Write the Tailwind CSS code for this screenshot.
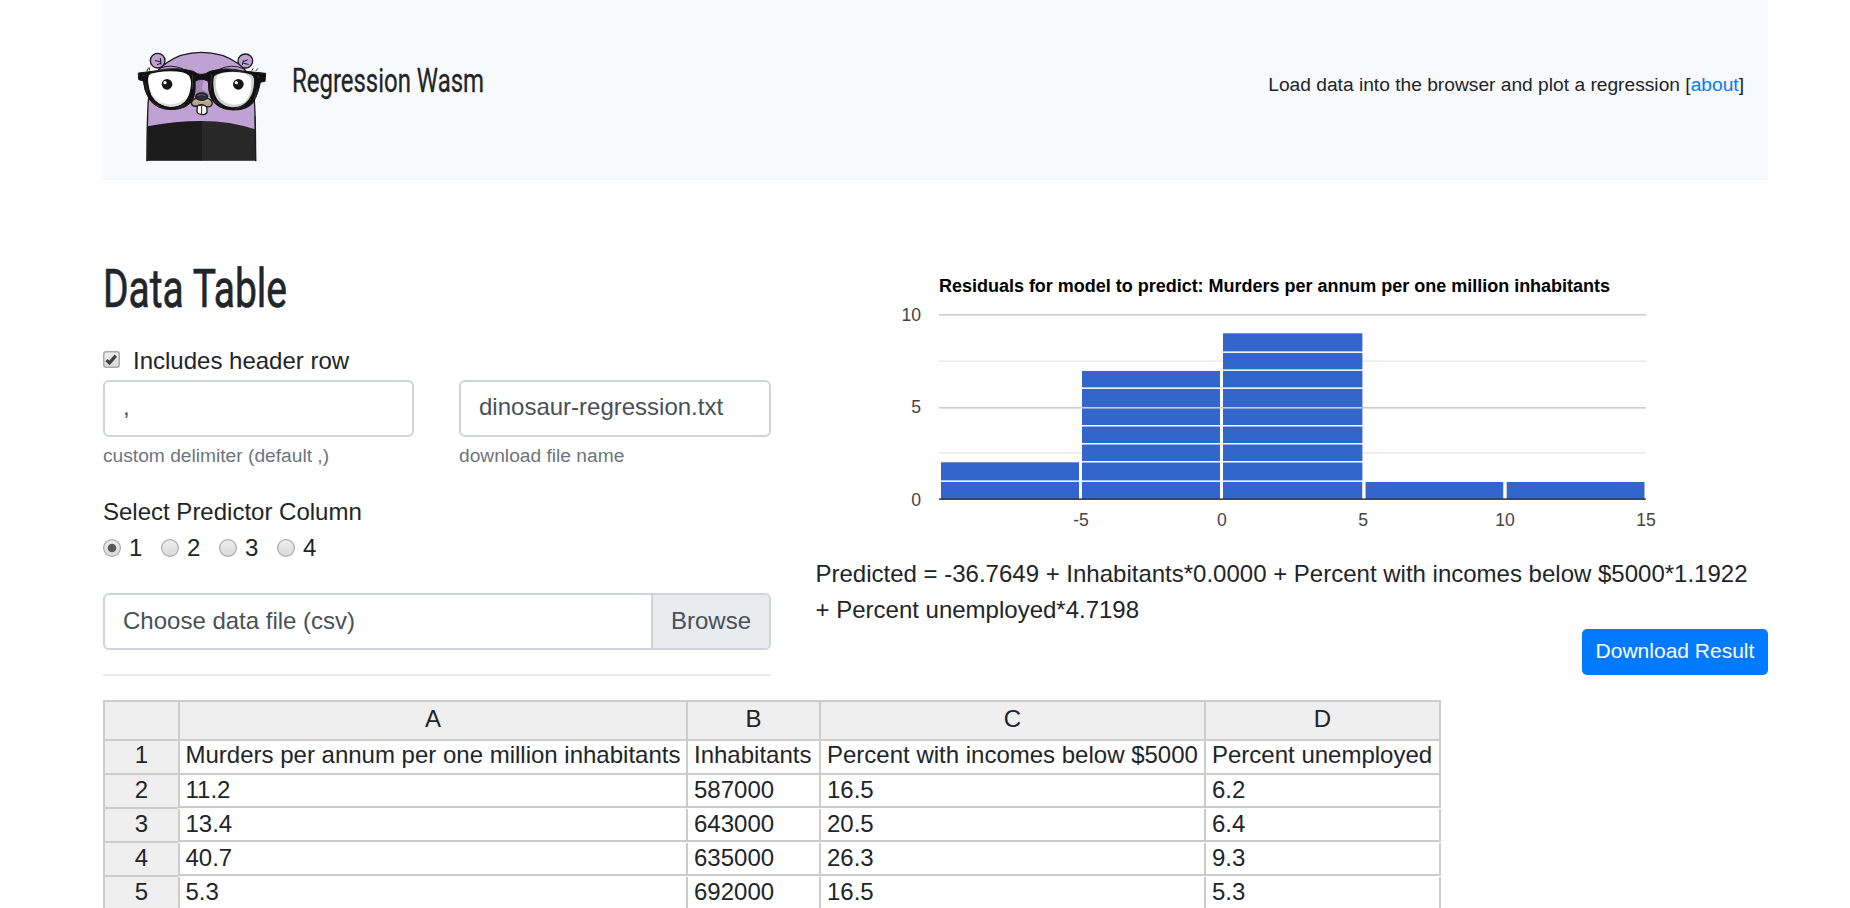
<!DOCTYPE html>
<html lang="en">
<head>
<meta charset="utf-8">
<title>Regression Wasm</title>
<script src="https://cdn.jsdelivr.net/npm/@tailwindcss/browser@4"></script>
</head>
<body class="bg-white h-[908px] overflow-hidden font-['Liberation_Sans',Arial,sans-serif] text-2xl leading-9 text-[#212529]">
<div class="ml-[103px] w-[1665px]">
  <header class="h-[180px] bg-[#f8f9fb] flex items-start justify-between pl-[27px] pr-[24px]">
    <div class="flex items-start">
      <svg class="mt-10 w-[145px] h-[130px]" viewBox="0 0 435 390" fill="none" stroke="#1c1c1e" stroke-width="4" stroke-linecap="round" stroke-linejoin="round">
        <ellipse cx="83" cy="62" rx="22" ry="22" fill="#c0a1d3"/>
        <ellipse cx="346" cy="63" rx="22" ry="21" fill="#c0a1d3"/>
        <path d="M51 362C52 270 50 190 60 140C66 104 88 84 108 70C140 46 175 37 214 37C253 37 290 46 323 70C343 84 362 104 368 140C378 190 376 270 377 362" fill="#c0a1d3"/>
        <path d="M76 62l16 3M91 55l2 18M92 70l-10 4M352 60l-12 5M340 62l-3 12M341 70l14 3" stroke-width="3"/>
        <path d="M53 259Q135 243 216 243V362H52Z" fill="#1b1b1b" stroke="none"/>
        <path d="M216 243Q300 243 375 268V362H216Z" fill="#282828" stroke="none"/>
        <path d="M53 230L51 362M375 230L377 362" stroke-width="3"/>
        <path d="M194 121Q215 108 237 121L242 170L214 174L190 168Z" fill="#a285b5" stroke="none"/>
        <path d="M220 118Q240 120 235 160L216 148Z" fill="#c0a1d3" stroke="none"/>
        <path d="M91 84Q120 72 158 86M268 88Q304 70 340 86" stroke-width="3"/>
        <path d="M26 99L92 91Q140 80 190 94Q204 105 214 103Q226 104 240 94Q290 80 338 93L407 100L405 124L391 127Q384 165 369 188Q350 211 308 210Q260 208 243 174Q234 150 235 124Q214 112 195 124Q198 157 188 180Q171 208 123 209Q79 208 58 178Q42 152 40 123L27 119Z" fill="#111" stroke="#151515" stroke-width="3"/>
        <path d="M57 105Q78 94 121 94Q164 94 177 107Q187 119 180 153Q170 198 124 200Q81 198 64 165Q49 124 57 105Z" fill="#fff" stroke="none"/>
        <path d="M57 130Q66 190 121 193Q158 189 174 167Q161 201 121 200Q65 198 57 130" fill="#ddd" stroke="none"/>
        <path d="M253 108Q271 95 310 95Q353 96 369 108Q377 122 367 158Q350 201 307 202Q264 197 253 158Q247 123 253 108Z" fill="#d2d2d4" stroke="none"/>
        <path d="M263 105Q291 94 331 98Q361 102 364 123Q364 165 346 184Q328 197 303 193Q270 187 259 150Q255 121 263 105Z" fill="#fff" stroke="none"/>
        <path d="M37 107L44 106M71 94Q100 85 137 86M47 132L52 154M69 189L89 200M144 204L165 194M188 106L187 146M245 104L241 150M253 180L274 197M316 206L344 197M374 174L382 148M387 113L383 106M337 96L300 88" stroke="#343434" stroke-width="3"/>
        <path d="M51 93l3-7M59 90l-2-7M378 92l5-6M366 91l3-5" stroke-width="3"/>
        <g stroke="none"><circle cx="111" cy="133" r="16" fill="#151515"/><circle cx="325" cy="133" r="16" fill="#151515"/><circle cx="105" cy="128" r="5" fill="#f5f5f5"/><circle cx="319" cy="128" r="5" fill="#f5f5f5"/></g>
        <path d="M202 195L201 216Q205 224 214 223Q228 226 231 216L230 195Z" fill="#fff"/>
        <path d="M215 199V221" stroke-width="3"/>
        <path d="M198 175Q185 180 184 190Q187 201 202 198Q215 189 229 200Q244 203 247 191Q246 177 231 175Z" fill="#b5a08f"/>
        <path d="M191 188Q198 176 215 178Q238 176 241 188Q228 182 214 187Q202 181 191 188" fill="#c8b7a8" stroke="none"/>
        <ellipse cx="215" cy="170" rx="18" ry="11" fill="#302e30"/>
        <path d="M204 166Q214 160 225 166" stroke="#626066" stroke-width="3"/>
      </svg>
      <h1 class="mt-14 ml-4"><svg class="w-[280px] h-12 overflow-visible" viewBox="0 0 280 48"><text x="1" y="36" textLength="192" lengthAdjust="spacingAndGlyphs" font-family="Roboto, sans-serif" font-size="33.5" font-weight="400" stroke="#212529" stroke-width=".3" fill="#212529">Regression Wasm</text></svg></h1>
    </div>
    <p class="mt-[70px] text-[19.2px] leading-[29px]">Load data into the browser and plot a regression [<a class="text-[#007bff]" href="#about">about</a>]</p>
  </header>

  <main>
    <div class="flex gap-11 h-[520px]">
      <section class="w-[668px] pt-[76px]">
        <h2 class="h-[87px]"><svg class="w-[300px] h-[70px] overflow-visible" viewBox="0 0 300 70"><text x="0" y="51" textLength="184" lengthAdjust="spacingAndGlyphs" font-family="Roboto, sans-serif" font-size="54" font-weight="400" stroke="#212529" stroke-width=".7" fill="#212529">Data Table</text></svg></h2>
        <label class="flex h-[37px] items-start">
          <svg class="mt-2 w-[17px] h-[18px]" viewBox="0 0 17 18"><defs><linearGradient id="control" x2="0" y2="1"><stop stop-color="#efefef"/><stop offset="1" stop-color="#d9d9d9"/></linearGradient></defs><rect x=".75" y=".75" width="15.5" height="15.5" rx="2.5" fill="url(#control)" stroke="#aaa" stroke-width="1.5"/><path d="M3.5 9.2L6.5 12L12.8 4.6" fill="none" stroke="#3f3f3f" stroke-width="3.2"/></svg>
          <span class="ml-[13px]">Includes header row</span>
        </label>
        <div class="flex gap-[45px] text-[#495057]">
          <div class="w-[311px]">
            <div class="h-[57px] border-2 border-[#ced4da] rounded-md pl-[18px] pt-[7px]">,</div>
            <small class="block mt-1 text-[19.2px] leading-[29px] text-[#6c757d]">custom delimiter (default ,)</small>
          </div>
          <div class="w-[312px]">
            <div class="h-[57px] border-2 border-[#ced4da] rounded-md pl-[18px] pt-[7px]">dinosaur-regression.txt</div>
            <small class="block mt-1 text-[19.2px] leading-[29px] text-[#6c757d]">download file name</small>
          </div>
        </div>
        <p class="mt-6">Select Predictor Column</p>
        <div class="flex h-[63px]">
          <label class="flex w-[58px]"><svg class="mt-[9px] w-[18px] h-[18px]" viewBox="0 0 18 18"><circle cx="9" cy="9" r="8.4" fill="url(#control)" stroke="#aaa" stroke-width="1.2"/><circle cx="9" cy="9" r="4.3" fill="#5a5a5a"/></svg><span class="ml-2">1</span></label>
          <label class="flex w-[58px]"><svg class="mt-[9px] w-[18px] h-[18px]" viewBox="0 0 18 18"><circle cx="9" cy="9" r="8.4" fill="url(#control)" stroke="#aaa" stroke-width="1.2"/></svg><span class="ml-2">2</span></label>
          <label class="flex w-[58px]"><svg class="mt-[9px] w-[18px] h-[18px]" viewBox="0 0 18 18"><circle cx="9" cy="9" r="8.4" fill="url(#control)" stroke="#aaa" stroke-width="1.2"/></svg><span class="ml-2">3</span></label>
          <label class="flex w-[58px]"><svg class="mt-[9px] w-[18px] h-[18px]" viewBox="0 0 18 18"><circle cx="9" cy="9" r="8.4" fill="url(#control)" stroke="#aaa" stroke-width="1.2"/></svg><span class="ml-2">4</span></label>
        </div>
        <div class="flex h-[57px] border-2 border-[#ced4da] rounded-md text-[#495057] overflow-hidden">
          <span class="flex-1 pl-[18px] pt-2">Choose data file (csv)</span>
          <span class="w-[118px] border-l-2 border-[#ced4da] bg-[#e9ecef] pl-[18px] pt-2">Browse</span>
        </div>
        <hr class="mt-6 border-t-2 border-[#e9e9e9]">
      </section>

      <section class="w-[953px] pt-[80px] flex flex-col">
        <svg class="w-[953px] h-[290px] shrink-0" viewBox="815 260 953 290" font-family="Liberation Sans, Arial, sans-serif" font-size="17.6">
          <text x="939" y="292" textLength="671" font-weight="700" font-size="18" fill="#000">Residuals for model to predict: Murders per annum per one million inhabitants</text>
          <g fill="#ebebeb"><rect x="939" y="360.4" width="707" height="1.6"/><rect x="939" y="452" width="707" height="1.6"/></g>
          <g fill="#ccc"><rect x="939" y="314" width="707" height="1.6"/><rect x="939" y="407" width="707" height="1.6"/></g>
          <g fill="#36c"><rect x="941" y="462.3" width="138" height="37"/><rect x="1082" y="371" width="138" height="128"/><rect x="1223" y="333.3" width="139.4" height="166"/><rect x="1365.4" y="482" width="138" height="17"/><rect x="1506.5" y="482" width="138" height="17"/></g>
          <g fill="#fff">
            <rect x="1079" y="462" width="3" height="36"/><rect x="1220" y="371" width="3" height="127"/><rect x="1362.5" y="482" width="2.8" height="16"/><rect x="1503.6" y="482" width="2.8" height="16"/>
            <rect x="940" y="480.4" width="423" height="1.5"/>
            <rect x="1081" y="461" width="282" height="1.5"/><rect x="1081" y="443" width="282" height="1.5"/><rect x="1081" y="425" width="282" height="1.5"/><rect x="1081" y="387.4" width="282" height="1.5"/>
            <rect x="1222" y="369.4" width="141" height="1.5"/><rect x="1222" y="351.4" width="141" height="1.5"/>
          </g>
          <g fill="#ccc"><rect x="1082" y="407" width="280" height="1.6"/></g>
          <rect x="939" y="498.4" width="707" height="1.5" fill="#333"/>
          <g fill="#444" text-anchor="end"><text x="921" y="321">10</text><text x="921" y="413">5</text><text x="921" y="506">0</text></g>
          <g fill="#444" text-anchor="middle"><text x="1081" y="526">-5</text><text x="1222" y="526">0</text><text x="1363.2" y="526">5</text><text x="1505" y="526">10</text><text x="1646" y="526">15</text></g>
        </svg>
        <p class="mt-[6px] ml-[.5px]">Predicted = -36.7649 + Inhabitants*0.0000 + Percent with incomes below $5000*1.1922<br>+ Percent unemployed*4.7198</p>
        <button class="self-end mt-[1px] w-[186px] h-[46px] rounded-[5px] bg-[#007bff] text-white text-[21px] leading-[44px] pb-[2px]">Download Result</button>
      </section>
    </div>

    <!-- Spreadsheet: each column stacks its own cells -->
    <div class="flex w-[1338px] leading-[34px]">
      <div class="w-[75px] text-center border-l-2 border-[#ccc] bg-[#efefef] *:h-[34px] *:border-b-2 *:border-[#ccc] *:leading-[30px]">
        <div class="h-[41px]! border-t-2"></div><div class="leading-[28px]!">1</div><div>2</div><div>3</div><div>4</div><div>5</div>
      </div>
      <div class="w-[508px]">
        <div class="h-[41px] border-y-2 border-l-2 border-[#ccc] bg-[#efefef] text-center">A</div>
        <div class="h-[34px] border-b-2 border-l-2 border-[#ccc] pl-[5.5px] leading-[28px]">Murders per annum per one million inhabitants</div>
        <div class="h-[33px] border-b-2 border-l-2 border-[#ccc] pl-[5.5px] leading-[30px]">11.2</div>
        <div class="mt-px h-[33px] border-b-2 border-l-2 border-[#ccc] pl-[5.5px] leading-[30px]">13.4</div>
        <div class="mt-px h-[33px] border-b-2 border-l-2 border-[#ccc] pl-[5.5px] leading-[30px]">40.7</div>
        <div class="mt-px h-[33px] border-b-2 border-l-2 border-[#ccc] pl-[5.5px] leading-[30px]">5.3</div>
      </div>
      <div class="w-[133px]">
        <div class="h-[41px] border-y-2 border-l-2 border-[#ccc] bg-[#efefef] text-center">B</div>
        <div class="h-[34px] border-b-2 border-l-2 border-[#ccc] pl-[6px] leading-[28px]">Inhabitants</div>
        <div class="h-[33px] border-b-2 border-l-2 border-[#ccc] pl-[6px] leading-[30px]">587000</div>
        <div class="mt-px h-[33px] border-b-2 border-l-2 border-[#ccc] pl-[6px] leading-[30px]">643000</div>
        <div class="mt-px h-[33px] border-b-2 border-l-2 border-[#ccc] pl-[6px] leading-[30px]">635000</div>
        <div class="mt-px h-[33px] border-b-2 border-l-2 border-[#ccc] pl-[6px] leading-[30px]">692000</div>
      </div>
      <div class="w-[385px]">
        <div class="h-[41px] border-y-2 border-l-2 border-[#ccc] bg-[#efefef] text-center">C</div>
        <div class="h-[34px] border-b-2 border-l-2 border-[#ccc] pl-[6px] leading-[28px]">Percent with incomes below $5000</div>
        <div class="h-[33px] border-b-2 border-l-2 border-[#ccc] pl-[6px] leading-[30px]">16.5</div>
        <div class="mt-px h-[33px] border-b-2 border-l-2 border-[#ccc] pl-[6px] leading-[30px]">20.5</div>
        <div class="mt-px h-[33px] border-b-2 border-l-2 border-[#ccc] pl-[6px] leading-[30px]">26.3</div>
        <div class="mt-px h-[33px] border-b-2 border-l-2 border-[#ccc] pl-[6px] leading-[30px]">16.5</div>
      </div>
      <div class="w-[237px]">
        <div class="h-[41px] border-2 border-[#ccc] bg-[#efefef] text-center">D</div>
        <div class="h-[34px] border-b-2 border-x-2 border-[#ccc] pl-[6px] leading-[28px]">Percent unemployed</div>
        <div class="h-[33px] border-b-2 border-x-2 border-[#ccc] pl-[6px] leading-[30px]">6.2</div>
        <div class="mt-px h-[33px] border-b-2 border-x-2 border-[#ccc] pl-[6px] leading-[30px]">6.4</div>
        <div class="mt-px h-[33px] border-b-2 border-x-2 border-[#ccc] pl-[6px] leading-[30px]">9.3</div>
        <div class="mt-px h-[33px] border-b-2 border-x-2 border-[#ccc] pl-[6px] leading-[30px]">5.3</div>
      </div>
    </div>
  </main>
</div>
</body>
</html>
